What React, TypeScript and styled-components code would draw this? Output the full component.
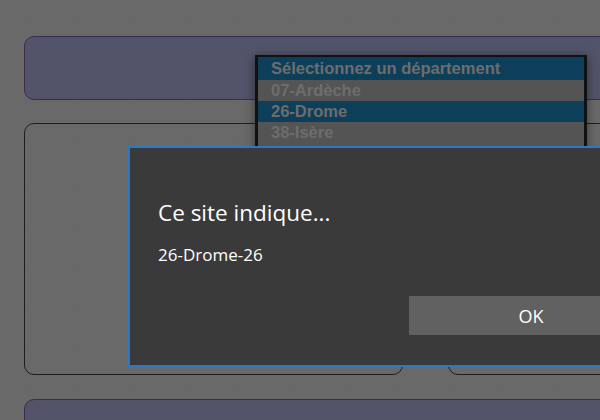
import styled, { createGlobalStyle } from "styled-components";

const GlobalStyle = createGlobalStyle`
  html, body {
    margin: 0;
    padding: 0;
    background: #6a6969;
  }
`;

const departements = [
  { label: "Sélectionnez un département", selected: true },
  { label: "07-Ardèche", selected: false },
  { label: "26-Drome", selected: true },
  { label: "38-Isère", selected: false },
  { label: "69-Rhône", selected: false },
];

const App: React.FC = () => {
  return (
    <Screen>
      <GlobalStyle />
      <Page>
        <Banner />
        <ContentRow>
          <Card />
          <Card />
        </ContentRow>
        <Banner />
      </Page>

      <SelectList>
        {departements.map((d) => (
          <Option key={d.label} selected={d.selected}>
            {d.label}
          </Option>
        ))}
      </SelectList>

      <Dialog>
        <DialogTitle>Ce site indique...</DialogTitle>
        <DialogMessage>26-Drome-26</DialogMessage>
        <DialogActions>
          <OkButton>OK</OkButton>
        </DialogActions>
      </Dialog>
    </Screen>
  );
};

export default App;

const Screen = styled.div`
  position: relative;
  width: 600px;
  height: 420px;
  overflow: hidden;
`;

const Page = styled.div`
  width: 600px;
  height: 420px;
  box-sizing: border-box;
  padding: 36px 0 0 24px;
  display: flex;
  flex-direction: column;
  gap: 23px;
  overflow: hidden;
  background-color: #6a6969;
  background-image: radial-gradient(rgba(92, 92, 92, 0.6) 0.6px, transparent 1.2px);
  background-size: 53px 41px;

  > * {
    width: 640px;
  }
`;

const Banner = styled.div`
  flex: 0 0 64px;
  box-sizing: border-box;
  border: 1px solid #3b2c4e;
  border-radius: 10px;
  background: #53536a;
`;

const ContentRow = styled.div`
  flex: 0 0 252px;
  display: grid;
  grid-template-columns: 379px 1fr;
  gap: 45px;
  margin-bottom: 1px;
`;

const Card = styled.div`
  box-sizing: border-box;
  border: 1px solid #1e1e1e;
  border-radius: 10px;
`;

const SelectList = styled.ul`
  position: absolute;
  left: 255px;
  top: 55px;
  width: 332px;
  height: 120px;
  margin: 0;
  padding: 0;
  box-sizing: border-box;
  list-style: none;
  border: 3px solid #111;
  border-top-width: 2px;
  background: #545454;
  box-shadow: 0 2px 10px rgba(0, 0, 0, 0.45);
  overflow: hidden;
`;

const Option = styled.li<{ selected: boolean }>`
  height: 21px;
  padding: 0 0 1px 13px;
  box-sizing: border-box;
  display: flex;
  align-items: center;
  font-family: "Liberation Sans", Arial, sans-serif;
  font-weight: bold;
  font-size: 16.5px;
  color: #6d6d6d;
  background: ${({ selected }) => (selected ? "#0e3f5a" : "#545454")};
  white-space: nowrap;

  &:first-child {
    height: 23px;
  }
`;

const Dialog = styled.div`
  position: absolute;
  left: 128px;
  top: 146px;
  width: 520px;
  height: 221px;
  box-sizing: border-box;
  border: 2px solid #2c78c6;
  background: #3a3a3a;
  padding: 49px 0 0 28px;
  display: flex;
  flex-direction: column;
  font-family: "Open Sans", "Noto Sans", sans-serif;
  color: #ffffff;
`;

const DialogTitle = styled.div`
  font-size: 22.5px;
  line-height: 32px;
`;

const DialogMessage = styled.div`
  margin-top: 14px;
  font-size: 17px;
  line-height: 24px;
`;

const DialogActions = styled.div`
  margin-top: 29px;
  display: flex;
`;

const OkButton = styled.button`
  width: 244px;
  height: 39px;
  margin-left: 251px;
  flex-shrink: 0;
  border: none;
  background: #616161;
  color: #ffffff;
  font-family: "Open Sans", "Noto Sans", sans-serif;
  font-size: 18px;
  padding: 0;
`;
